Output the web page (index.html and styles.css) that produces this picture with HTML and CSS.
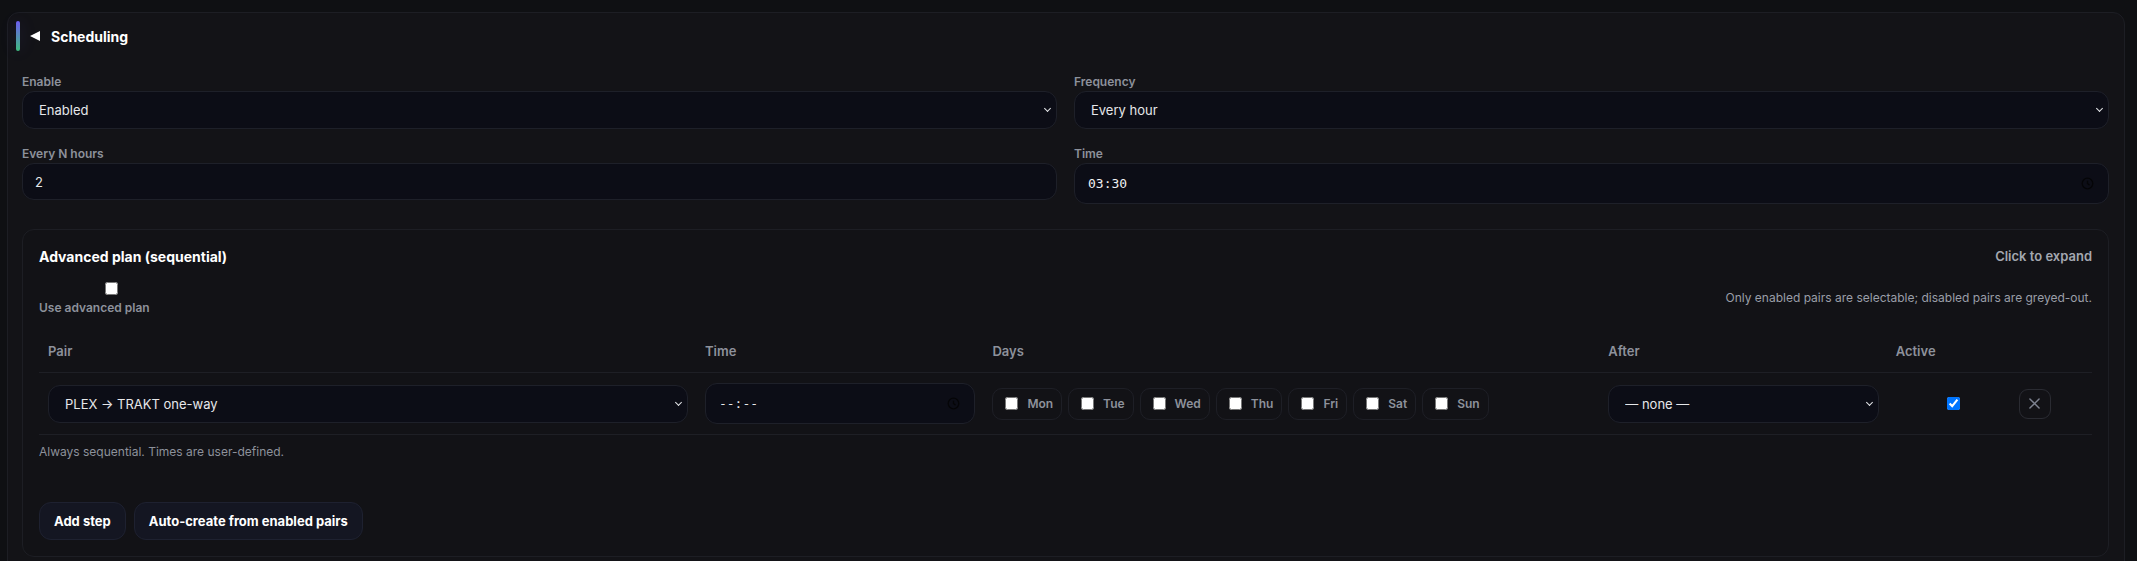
FILE: index.html
```html
<!DOCTYPE html>
<html lang="en">
<head>
  <meta charset="UTF-8">
  <meta name="viewport" content="width=device-width, initial-scale=1.0">
  <title>Scheduling</title>
  <link rel="stylesheet" href="styles.css">
</head>
<body>

  <section class="panel">
    <div class="panel-head">
      <span class="accent"></span>
      <span class="caret"></span>
      <h2>Scheduling</h2>
    </div>

    <div class="form-grid">
      <div class="field">
        <label for="sched-enable">Enable</label>
        <div class="select-wrap">
          <select id="sched-enable">
            <option>Enabled</option>
            <option>Disabled</option>
          </select>
        </div>
      </div>
      <div class="field">
        <label for="sched-freq">Frequency</label>
        <div class="select-wrap">
          <select id="sched-freq">
            <option>Every hour</option>
            <option>Every N hours</option>
            <option>Daily</option>
          </select>
        </div>
      </div>
      <div class="field">
        <label for="sched-hours">Every N hours</label>
        <input type="number" id="sched-hours" class="num-input" value="2">
      </div>
      <div class="field">
        <label for="sched-time">Time</label>
        <div class="time-field tall">
          <input type="text" id="sched-time" value="03:30">
          <svg class="clock" viewBox="0 0 16 16" width="13" height="13"><circle cx="8" cy="8" r="6.5" fill="none" stroke="#050507" stroke-width="1.6"/><path d="M8 4.5V8l2.5 2" fill="none" stroke="#050507" stroke-width="1.6"/></svg>
        </div>
      </div>
    </div>

    <div class="plan">
      <div class="plan-head">
        <h3>Advanced plan (sequential)</h3>
        <span class="expand">Click to expand</span>
      </div>

      <div class="plan-opts">
        <label class="toggle">
          <input type="checkbox">
          <span>Use advanced plan</span>
        </label>
        <span class="note">Only enabled pairs are selectable; disabled pairs are greyed-out.</span>
      </div>

      <table class="steps">
        <colgroup>
          <col style="width: 32%">
          <col style="width: 14%">
          <col style="width: 30%">
          <col style="width: 14%">
          <col style="width: 6%">
          <col style="width: 4%">
        </colgroup>
        <thead>
          <tr>
            <th>Pair</th>
            <th>Time</th>
            <th>Days</th>
            <th>After</th>
            <th>Active</th>
            <th></th>
          </tr>
        </thead>
        <tbody>
          <tr>
            <td>
              <div class="select-wrap">
                <select>
                  <option>PLEX → TRAKT one-way</option>
                </select>
              </div>
            </td>
            <td>
              <div class="time-field">
                <input type="text" placeholder="--:--">
                <svg class="clock" viewBox="0 0 16 16" width="13" height="13"><circle cx="8" cy="8" r="6.5" fill="none" stroke="#050507" stroke-width="1.6"/><path d="M8 4.5V8l2.5 2" fill="none" stroke="#050507" stroke-width="1.6"/></svg>
              </div>
            </td>
            <td>
              <div class="days">
                <label class="day"><input type="checkbox"><span>Mon</span></label>
                <label class="day"><input type="checkbox"><span>Tue</span></label>
                <label class="day"><input type="checkbox"><span>Wed</span></label>
                <label class="day"><input type="checkbox"><span>Thu</span></label>
                <label class="day"><input type="checkbox"><span>Fri</span></label>
                <label class="day"><input type="checkbox"><span>Sat</span></label>
                <label class="day"><input type="checkbox"><span>Sun</span></label>
              </div>
            </td>
            <td>
              <div class="select-wrap">
                <select>
                  <option>— none —</option>
                </select>
              </div>
            </td>
            <td class="active-cell"><input type="checkbox" checked></td>
            <td>
              <button class="remove" title="Remove step">
                <svg viewBox="0 0 12 12" width="11" height="11"><path d="M1 1l10 10M11 1L1 11" stroke="#7d8290" stroke-width="1.6" stroke-linecap="round"/></svg>
              </button>
            </td>
          </tr>
        </tbody>
      </table>

      <p class="hint">Always sequential. Times are user-defined.</p>

      <div class="actions">
        <button class="btn">Add step</button>
        <button class="btn">Auto-create from enabled pairs</button>
      </div>
    </div>
  </section>

</body>
</html>
```

FILE: styles.css
```css
* {
  box-sizing: border-box;
}

body {
  margin: 0;
  background: #0f1013;
  font-family: Inter, "Noto Sans", sans-serif;
  color: #e6e7ea;
}

/* outer card */
.panel {
  margin: 12px 12px 0 7px;
  padding: 8px 15px 16px 14px;
  background: #131317;
  border: 1px solid #1d1e24;
  border-radius: 12px;
}

.panel-head {
  display: flex;
  align-items: center;
  height: 30px;
  margin: 0 0 23px -6px;
}

.accent {
  width: 4px;
  height: 30px;
  border-radius: 2px;
  background: linear-gradient(180deg, #6d5cf0, #3dbb7e);
  box-shadow: 0 0 16px rgba(110, 100, 240, 0.18);
}

.caret {
  width: 0;
  height: 0;
  margin: 0 11px 0 10px;
  border-right: 10px solid #ffffff;
  border-top: 5px solid transparent;
  border-bottom: 5px solid transparent;
}

.panel-head h2 {
  margin: 0;
  font-size: 14px;
  font-weight: 700;
  color: #ffffff;
}

.form-grid {
  display: grid;
  grid-template-columns: 1fr 1fr;
  column-gap: 17px;
  row-gap: 17px;
}

.field label {
  display: block;
  font-size: 12px;
  line-height: 16px;
  font-weight: 600;
  color: #8d919b;
  margin-bottom: 1px;
}

/* inputs */
select,
.num-input,
.time-field input {
  width: 100%;
  background: #0c0d16;
  border: 1px solid #1e2029;
  border-radius: 12px;
  color: #e6e7ea;
  font-family: Inter, "Noto Sans", sans-serif;
  font-size: 13px;
  outline: none;
}

select {
  appearance: none;
  -webkit-appearance: none;
  height: 38px;
  padding: 0 28px 0 16px;
}

.select-wrap {
  position: relative;
}

.select-wrap::after {
  content: "";
  position: absolute;
  right: 7px;
  top: 15px;
  width: 4px;
  height: 4px;
  border-right: 1.5px solid #e6e7ea;
  border-bottom: 1.5px solid #e6e7ea;
  transform: rotate(45deg);
  pointer-events: none;
}

.num-input {
  height: 37px;
  padding: 0 12px;
}

.time-field {
  position: relative;
}

.time-field input {
  height: 41px;
  padding: 0 13px;
  font-family: "DejaVu Sans Mono", monospace;
  font-size: 13px;
  color: #f0f1f3;
}

.time-field input::placeholder {
  color: #e6e7ea;
}

.time-field .clock {
  position: absolute;
  right: 15px;
  top: 14px;
}

/* advanced plan card */
.plan {
  margin-top: 25px;
  padding: 16px;
  background: #121216;
  border: 1px solid #1d1e24;
  border-radius: 12px;
}

.plan-head {
  display: flex;
  justify-content: space-between;
  align-items: center;
  height: 20px;
}

.plan-head h3 {
  margin: 0;
  font-size: 14px;
  font-weight: 700;
  color: #ffffff;
}

.expand {
  font-size: 13px;
  font-weight: 600;
  color: #a3a7b0;
}

.plan-opts {
  display: flex;
  justify-content: space-between;
  align-items: center;
  margin-top: 13px;
}

.toggle {
  display: flex;
  flex-direction: column;
  align-items: flex-start;
  font-size: 12px;
  line-height: 16px;
  font-weight: 600;
  color: #8d919b;
}

.toggle input {
  margin: 3px 0 3px 66px;
}

.toggle span {
  margin-top: 2px;
}

.note {
  font-size: 12px;
  color: #9a9ea8;
}

/* steps table */
.steps {
  width: 100%;
  margin-top: 14px;
  border-collapse: collapse;
  table-layout: fixed;
}

.steps th {
  text-align: left;
  padding: 12px 8px 12px 9px;
  font-size: 13px;
  line-height: 18px;
  font-weight: 600;
  color: #8d919b;
  border-bottom: 1px solid #1e1f25;
}

.steps td {
  padding: 10px 8px 10px 9px;
  vertical-align: middle;
  border-bottom: 1px solid #1e1f25;
}

.days {
  display: flex;
  gap: 6px;
}

.day {
  display: inline-flex;
  align-items: center;
  gap: 6px;
  height: 32px;
  padding: 0 8px;
  border: 1px solid #1e1f26;
  border-radius: 10px;
  font-size: 12px;
  font-weight: 600;
  color: #8d919b;
}

.active-cell {
  text-align: center;
}

.steps td.active-cell {
  padding-left: 17px;
}

.remove {
  display: flex;
  align-items: center;
  justify-content: center;
  width: 32px;
  height: 30px;
  padding: 0;
  background: transparent;
  border: 1px solid #2a2b32;
  border-radius: 9px;
  cursor: pointer;
}

.hint {
  margin: 9px 0 0;
  font-size: 12px;
  line-height: 16px;
  color: #8d919b;
}

.actions {
  display: flex;
  gap: 8px;
  margin-top: 42px;
}

.btn {
  height: 38px;
  padding: 0 14px;
  background: #141622;
  border: 1px solid #1e2130;
  border-radius: 12px;
  color: #ffffff;
  font-family: Inter, "Noto Sans", sans-serif;
  font-size: 13px;
  font-weight: 700;
  cursor: pointer;
}
```
